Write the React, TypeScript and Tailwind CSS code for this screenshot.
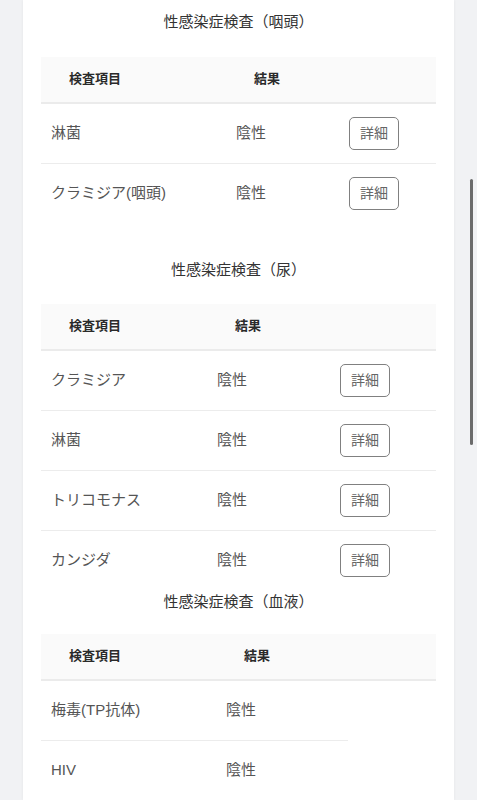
import React from 'react';

type Row = { name: string; result: string; detail?: boolean };

type Section = {
  title: string;
  rows: Row[];
  titleTop: string;
  headGap: string;
  nameCol: string;
  resultCol: string;
  lineWidth?: string;
};

const sections: Section[] = [
  {
    title: '性感染症検査（咽頭）',
    titleTop: 'pt-[11px]',
    headGap: 'mb-[24px]',
    nameCol: 'w-[185px]',
    resultCol: 'w-[113px]',
    rows: [
      { name: '淋菌', result: '陰性', detail: true },
      { name: 'クラミジア(咽頭)', result: '陰性', detail: true },
    ],
  },
  {
    title: '性感染症検査（尿）',
    titleTop: 'pt-[35px]',
    headGap: 'mb-[23px]',
    nameCol: 'w-[166px]',
    resultCol: 'w-[123px]',
    rows: [
      { name: 'クラミジア', result: '陰性', detail: true },
      { name: '淋菌', result: '陰性', detail: true },
      { name: 'トリコモナス', result: '陰性', detail: true },
      { name: 'カンジダ', result: '陰性', detail: true },
    ],
  },
  {
    title: '性感染症検査（血液）',
    titleTop: 'pt-0',
    headGap: 'mb-[21px]',
    nameCol: 'w-[175px]',
    resultCol: 'w-[132px]',
    lineWidth: 'w-[307px]',
    rows: [
      { name: '梅毒(TP抗体)', result: '陰性' },
      { name: 'HIV', result: '陰性' },
    ],
  },
];

const ResultTable: React.FC<{ s: Section }> = ({ s }) => (
  <div className={s.titleTop}>
    <h2 className={`text-center text-[15px] leading-[22px] text-[#333] ${s.headGap}`}>{s.title}</h2>

    {/* header */}
    <div className="flex h-[47px] items-center bg-[#fafafa] border-b-2 border-[#ebebeb] pb-[2px] text-[13px] font-semibold text-[#2a2a2a]">
      <div className={`${s.nameCol} pl-[28px]`}>検査項目</div>
      <div className={`${s.resultCol} pl-[28px]`}>結果</div>
    </div>

    {s.rows.map((r, i) => {
      const last = i === s.rows.length - 1;
      return (
        <div key={r.name} className="flex flex-col">
          <div className="flex h-[59px] items-center text-[15px] text-[#555]">
            <div className={`${s.nameCol} pl-[10px]`}>{r.name}</div>
            <div className={`${s.resultCol} pl-[10px]`}>{r.result}</div>
            {r.detail && (
              <button className="ml-[10px] h-[33px] w-[50px] rounded-[5px] border border-[#808080] bg-white text-[14px] text-[#666]">
                詳細
              </button>
            )}
          </div>
          <div className={`h-px ${last ? 'bg-transparent' : 'bg-[#ececec]'} ${s.lineWidth ?? 'w-full'}`} />
        </div>
      );
    })}
  </div>
);

export default function App() {
  return (
    <div
      className="relative h-[800px] overflow-hidden bg-[#f1f2f4]"
      style={{ fontFamily: '"Liberation Sans", "Noto Sans CJK JP", sans-serif' }}
    >
      <div className="mx-[23px] h-full bg-white px-[18px] shadow-[0_0_3px_rgba(0,0,0,0.06)]">
        {sections.map((s) => (
          <ResultTable key={s.title} s={s} />
        ))}
      </div>

      {/* overlay scroll indicator */}
      <div className="absolute right-[4px] top-[179px] h-[266px] w-[3px] rounded-full bg-[#6b6b6b]" />
    </div>
  );
}
